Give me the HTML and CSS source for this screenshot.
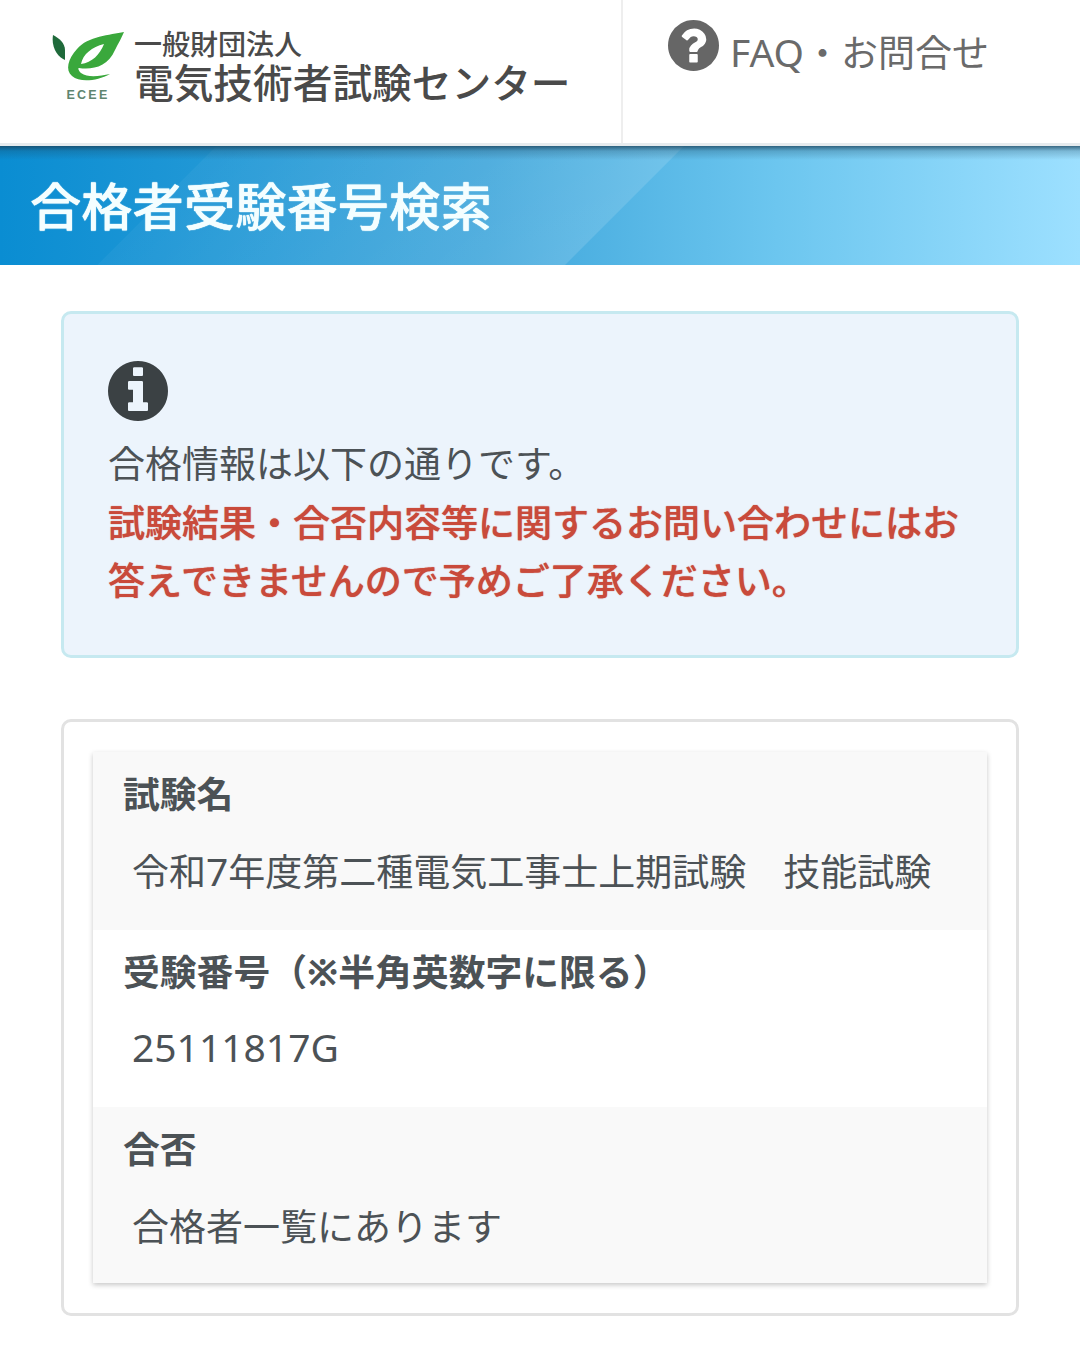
FILE: index.html
```html
<!DOCTYPE html>
<html lang="ja">
<head>
<meta charset="utf-8">
<title>合格者受験番号検索</title>
<link rel="stylesheet" href="styles.css">
</head>
<body>
<header class="site-header">
  <div class="brand">
    <div class="logo-mark">
      <svg class="leaf" viewBox="0 0 72 52" aria-hidden="true">
        <path fill="#1f6a3b" d="M1 3C7 6 13 11 13 18 13 22 13 25 13 28 6 25 -1 16 1 3Z"/>
        <path fill="#3aa83c" fill-rule="evenodd" d="M72 0C58 3 36 4 25 17 16 27 13 38 20 44 28 51 45 49 58 42 48 44 36 46 29 41 26 38 26 36 27 36 40 38 56 35 63 18 66 12 70 5 72 0ZM29 32C31 22 40 15 52 12 48 22 40 31 29 32Z"/>
      </svg>
      <span class="logo-abbr">ECEE</span>
    </div>
    <div class="brand-text">
      <span class="brand-sub">一般財団法人</span>
      <span class="brand-name">電気技術者試験センター</span>
    </div>
  </div>
  <a class="faq" href="#">
    <svg class="faq-icon" viewBox="128 128 1536 1536" aria-hidden="true"><path fill="#666" d="M1024 1376v-192q0-14-9-23t-23-9h-192q-14 0-23 9t-9 23v192q0 14 9 23t23 9h192q14 0 23-9t9-23zm256-672q0-88-55.500-163t-138.500-116-170-41q-243 0-371 213-15 24 8 42l132 100q7 6 19 6 16 0 25-12 53-68 86-92 34-24 86-24 48 0 85.500 26t37.500 59q0 38-20 61t-68 45q-63 28-115.500 86.500t-52.500 125.500v36q0 14 9 23t23 9h192q14 0 23-9t9-23q0-19 21.500-49.500t54.500-49.500q32-18 49-28.500t46-35 44.500-48 28-60.500 12.500-81zm384 192q0 209-103 385.500t-279.500 279.500-385.500 103-385.500-103-279.500-279.500-103-385.500 103-385.500 279.500-279.500 385.500-103 385.500 103 279.500 279.500 103 385.500z"/></svg>
    <span class="faq-label"><span class="latin">FAQ</span>・お問合せ</span>
  </a>
</header>
<h1 class="hero">合格者受験番号検索</h1>
<main class="content">
  <section class="notice">
    <svg class="notice-icon" viewBox="128 128 1536 1536" aria-hidden="true"><path fill="#3b4144" d="M1152 1376v-160q0-14-9-23t-23-9h-96v-512q0-14-9-23t-23-9h-320q-14 0-23 9t-9 23v160q0 14 9 23t23 9h96v320h-96q-14 0-23 9t-9 23v160q0 14 9 23t23 9h448q14 0 23-9t9-23zm-128-896v-160q0-14-9-23t-23-9h-192q-14 0-23 9t-9 23v160q0 14 9 23t23 9h192q14 0 23-9t9-23zm640 416q0 209-103 385.500t-279.500 279.500-385.500 103-385.500-103-279.500-279.500-103-385.500 103-385.500 279.500-279.500 385.500-103 385.500 103 279.500 279.500 103 385.500z"/></svg>
    <p class="notice-text">合格情報は以下の通りです。</p>
    <p class="notice-alert">試験結果・合否内容等に関するお問い合わせにはお答えできませんので予めご了承ください。</p>
  </section>
  <section class="card">
    <dl class="result">
      <div class="row">
        <dt>試験名</dt>
        <dd>令和<span class="latin">7</span>年度第二種電気工事士上期試験　技能試験</dd>
      </div>
      <div class="row">
        <dt>受験番号（※半角英数字に限る）</dt>
        <dd class="code"><span class="latin">25111817G</span></dd>
      </div>
      <div class="row">
        <dt>合否</dt>
        <dd>合格者一覧にあります</dd>
      </div>
    </dl>
  </section>
</main>
</body>
</html>
```
FILE: styles.css
```css
* { box-sizing: border-box; }
html, body { margin: 0; padding: 0; }
body {
  width: 1080px;
  height: 1350px;
  overflow: hidden;
  background: #fff;
  color: #4c5256;
  font-family: "Noto Sans", "Noto Sans CJK JP", sans-serif;
  font-weight: 400;
}
.latin { font-size: 39px; line-height: 1; }
.site-header {
  display: flex;
  height: 146px;
  border-bottom: 3px solid #e6ebee;
}
.brand {
  width: 623px;
  flex: none;
  display: flex;
  align-items: flex-start;
  padding: 32px 0 0 52px;
  border-right: 2px solid #eeeeee;
}
.logo-mark {
  width: 72px;
  flex: none;
  display: flex;
  flex-direction: column;
  align-items: center;
}
.leaf { width: 72px; height: 52px; display: block; }
.logo-abbr {
  margin: 5px 0 0 0;
  font-family: "Liberation Sans", sans-serif;
  font-size: 12.5px;
  line-height: 13px;
  font-weight: 700;
  letter-spacing: 2.2px;
  color: #5f8570;
  white-space: nowrap;
}
.brand-text {
  margin: -4px 0 0 10px;
  display: flex;
  flex-direction: column;
  color: #4a4a4a;
  font-family: "Noto Sans CJK JP", sans-serif;
  font-weight: 500;
}
.brand-sub { font-size: 28px; line-height: 28px; margin-top: 1px; }
.brand-name { font-size: 39.7px; line-height: 48px; white-space: nowrap; }
.faq {
  display: flex;
  align-items: flex-start;
  padding: 20px 0 0 45px;
  color: #6a6a6a;
  font-size: 37px;
  text-decoration: none;
  white-space: nowrap;
}
.faq-icon { width: 51px; height: 51px; margin-right: 11px; flex: none; }
.faq-label { line-height: 66px; }
.hero {
  margin: 0;
  height: 119px;
  padding-left: 30px;
  color: #f4feff;
  font-family: "Noto Sans CJK JP", sans-serif;
  font-size: 51.3px;
  font-weight: 500;
  line-height: 116px;
  text-shadow: 0 0 1px #f4feff, 0 0 1px #f4feff;
  background:
    linear-gradient(180deg, rgba(25,65,90,.75) 0, rgba(25,65,90,.25) 5px, rgba(25,65,90,0) 14px),
    linear-gradient(135deg, rgba(255,255,255,0) 18%, rgba(255,255,255,.04) 18.1%, rgba(255,255,255,.13) 57%, rgba(255,255,255,0) 57.1%),
    linear-gradient(90deg, #0a8dd2 0%, #3fa6db 45%, #6cc6ef 72%, #9de0ff 100%);
}
.content { padding: 46px 61px 0; }
.notice {
  height: 347px;
  padding: 47px 44px 0;
  background: #ecf4fc;
  border: 3px solid #c6e9f0;
  border-radius: 10px;
}
.notice-icon { display: block; width: 60px; height: 60px; }
.notice-text, .notice-alert { margin: 0; font-size: 37px; line-height: 58.5px; }
.notice-text { margin-top: 14px; }
.notice-alert { color: #c94a3b; font-weight: 500; text-shadow: 0 0 1px #c94a3b; }
.card {
  height: 597px;
  margin-top: 61px;
  padding: 30px 29px;
  border: 3px solid #e2e2e2;
  border-radius: 10px;
}
.result {
  margin: 0;
  box-shadow: 0 2px 5px rgba(0,0,0,.22);
}
.row { height: 177px; padding: 15px 30px 0; }
.row:first-child { height: 178px; }
.row:last-child { height: 176px; }
.row:nth-child(odd) { background: #f9f9f9; }
.row dt { font-size: 36.8px; line-height: 54px; font-weight: 700; white-space: nowrap; }
.row dd { margin: 24px 0 0 9px; font-size: 37px; line-height: 54px; white-space: nowrap; }
.row dd.code { margin-top: 22px; }
```
